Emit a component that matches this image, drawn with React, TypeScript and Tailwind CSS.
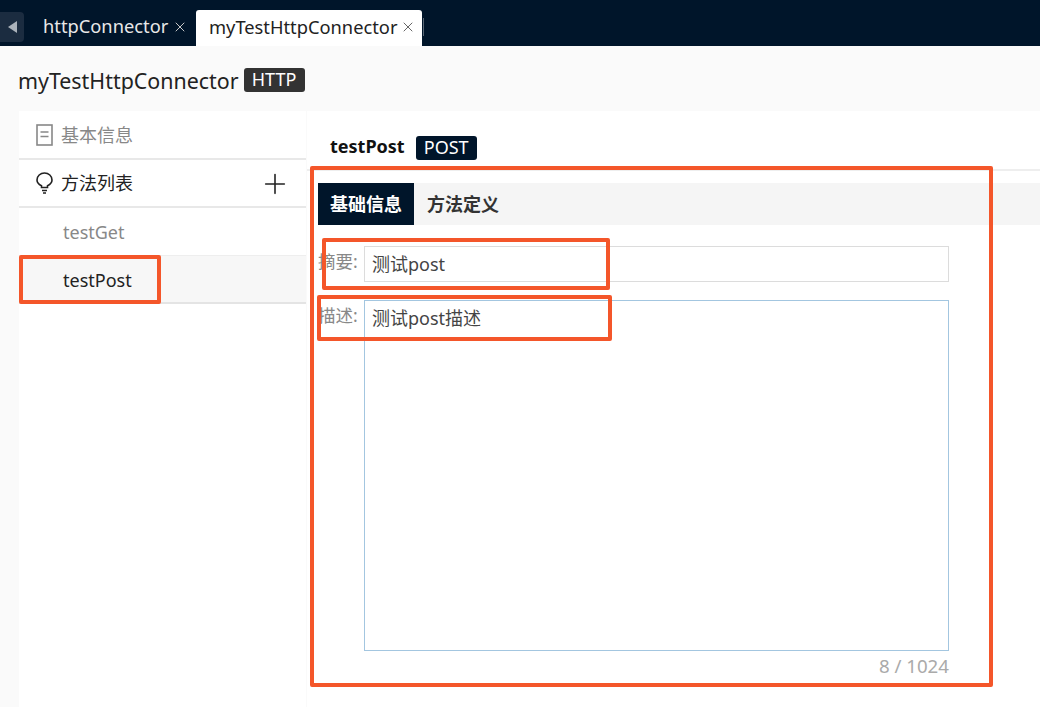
import { Plus, X } from "lucide-react";

const font = "font-['Noto_Sans','Noto_Sans_CJK_SC',sans-serif]";

const DocIcon = () => (
  <svg width="17" height="22" viewBox="0 0 17 22" fill="none" stroke="currentColor" strokeWidth="1.6">
    <rect x="1" y="1" width="15" height="20" />
    <path d="M4.5 8h8M4.5 12.5h8" />
  </svg>
);

const BulbIcon = () => (
  <svg width="17" height="22" viewBox="0 0 17 22" fill="none" stroke="currentColor" strokeWidth="1.6">
    <path d="M5.5 15.5v-1.8C3 12.4 1 10.500 1 7.900 1 4 4.300 1 8.500 1S16 4 16 7.900c0 2.600-2 4.500-4.500 5.800v1.800z" />
    <path d="M6 18.500h5M7 21h3" />
  </svg>
);

export default function App() {
  return (
    <main className={`relative h-[707px] w-[1040px] overflow-hidden bg-[#fafafa] text-[18px] text-[#333] ${font}`}>
      {/* tab bar */}
      <header className="flex h-[46px] items-end bg-[#00152a]">
        <div className="mb-[4px] flex h-[30px] w-[24px] items-center justify-center rounded-r-[4px] bg-[#1b2c40]">
          <span className="h-0 w-0 border-y-[6px] border-r-[9px] border-y-transparent border-r-[#aab2ba]" />
        </div>
        <div className="ml-[19px] flex h-[37px] w-[153px] items-center gap-[4px] pb-[2px] text-[#e8e8e8]">
          <span className="text-[18.3px] leading-none">httpConnector</span>
          <X size={16} strokeWidth={1.5} className="text-[#c8c8c8]" />
        </div>
        <div className="flex h-[36px] w-[226px] items-center gap-[3px] self-end rounded-t-[3px] bg-white pb-[2px] pl-[13px] text-[#222]">
          <span className="text-[18.3px] leading-none">myTestHttpConnector</span>
          <X size={16} strokeWidth={1.5} className="text-[#666]" />
        </div>
        <span className="mb-[10px] ml-[1px] h-[18px] w-px bg-[#5a6775]" />
      </header>

      {/* title */}
      <div className="flex h-[65px] items-center gap-[5px] pl-[18px] text-[#222]">
        <span className="pt-[5px] text-[21.4px] leading-none">myTestHttpConnector</span>
        <span className="mt-[3px] flex h-[24px] w-[61px] items-center justify-center rounded-[3px] bg-[#333] pb-[2px] text-white">HTTP</span>
      </div>

      <div className="flex h-[596px] pl-[19px]">
        {/* sidebar */}
        <aside className="w-[287px] bg-white">
          <div className="flex h-[49px] items-center gap-[8px] border-b-2 border-[#e8e8e8] pl-[17px] text-[#888]">
            <DocIcon />
            <span className="pt-[1px] text-[18px]">基本信息</span>
          </div>
          <div className="flex h-[48px] items-center gap-[8px] border-b-2 border-[#e8e8e8] pl-[17px] pr-[21px] text-[#222]">
            <BulbIcon />
            <span className="flex-1 text-[18px]">方法列表</span>
            <Plus size={32} strokeWidth={1.2} className="-mx-[6px] mt-[1px]" />
          </div>
          <div className="flex h-[48px] items-center border-b border-[#eee] pt-[1px] pl-[44px] text-[#888]">testGet</div>
          <div className="flex h-[48px] items-center border-b-2 border-[#e4e4e4] bg-[#f7f7f7] pt-[2px] pl-[44px] text-[#222]">testPost</div>
        </aside>

        {/* main panel */}
        <section className="ml-px flex-1 bg-white">
          <div className="flex h-[60px] items-end gap-[11px] border-b-2 border-[#eee] pb-[9px] pl-[23px]">
            <span className="pb-[2px] font-bold leading-[24px] text-[#111]">testPost</span>
            <span className="flex h-[24px] w-[61px] items-center justify-center rounded-[3px] bg-[#00152a] pb-[2px] text-white">POST</span>
          </div>

          <div className="mt-[12px] ml-[11px] flex h-[42px] bg-[#f5f5f5] font-bold">
            <div className="flex w-[96px] items-center justify-center bg-[#00152a] text-white">基础信息</div>
            <div className="flex items-center pl-[13px] text-[#333]">方法定义</div>
          </div>

          <div className="mt-[21px] ml-[11px] flex h-[36px] items-start">
            <label className="w-[46px] shrink-0 text-[17.5px] leading-[30px] whitespace-nowrap text-[#888]">摘要:</label>
            <div className="flex h-[36px] w-[585px] items-center border border-[#dcdcdc] pl-[7px] text-[#444]">测试post</div>
          </div>

          <div className="mt-[18px] ml-[11px] flex items-start">
            <label className="w-[46px] shrink-0 text-[17.5px] leading-[30px] whitespace-nowrap text-[#888]">描述:</label>
            <div className="flex w-[585px] flex-col">
              <div className="h-[351px] border border-[#a3c6e0] pt-[4px] pl-[7px] text-[#444]">测试post描述</div>
              <div className="mt-[1px] text-right text-[18.7px] text-[#aaa]">8 / 1024</div>
            </div>
          </div>
        </section>
      </div>

      {/* red annotation boxes */}
      <div className="absolute top-[166px] left-[310px] h-[521px] w-[683px] rounded-[2px] border-4 border-[#f4562a]" />
      <div className="absolute top-[238px] left-[322px] h-[52px] w-[288px] rounded-[2px] border-4 border-[#f4562a]" />
      <div className="absolute top-[295px] left-[317px] h-[46px] w-[295px] rounded-[2px] border-4 border-[#f4562a]" />
      <div className="absolute top-[255px] left-[19px] h-[49px] w-[142px] rounded-[2px] border-4 border-[#f4562a]" />
    </main>
  );
}
